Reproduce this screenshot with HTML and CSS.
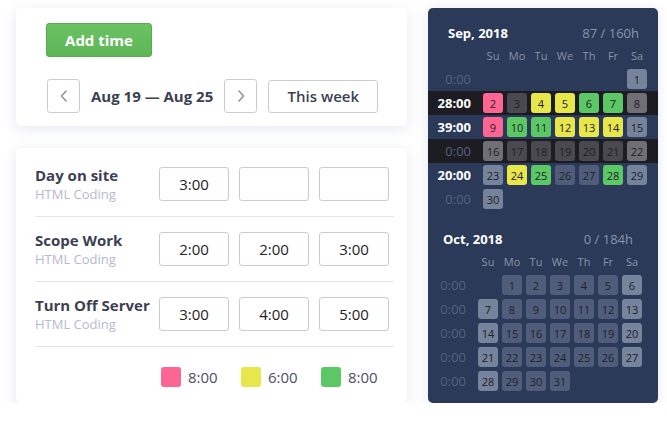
FILE: index.html
```html
<!DOCTYPE html>
<html>
<head>
<meta charset="utf-8">
<link rel="stylesheet" href="styles.css">
</head>
<body>
<div class="page">
  <div class="left">
    <section class="card card-top">
      <button class="btn-add">Add time</button>
      <div class="nav">
        <button class="btn-arrow" aria-label="Previous week">
          <svg width="10" height="14" viewBox="0 0 10 14"><path d="M7 2 L2.5 7 L7 12" fill="none" stroke="#8f94ab" stroke-width="1.6" stroke-linecap="round" stroke-linejoin="round"/></svg>
        </button>
        <span class="range">Aug 19 — Aug 25</span>
        <button class="btn-arrow" aria-label="Next week">
          <svg width="10" height="14" viewBox="0 0 10 14"><path d="M3 2 L7.5 7 L3 12" fill="none" stroke="#8f94ab" stroke-width="1.6" stroke-linecap="round" stroke-linejoin="round"/></svg>
        </button>
        <button class="btn-week">This week</button>
      </div>
    </section>

    <section class="card card-tasks">
      <div class="task">
        <div class="task-label">
          <div class="task-title">Day on site</div>
          <div class="task-sub">HTML Coding</div>
        </div>
        <div class="task-inputs">
          <div class="time-box">3:00</div>
          <div class="time-box"></div>
          <div class="time-box"></div>
        </div>
      </div>
      <div class="task">
        <div class="task-label">
          <div class="task-title">Scope Work</div>
          <div class="task-sub">HTML Coding</div>
        </div>
        <div class="task-inputs">
          <div class="time-box">2:00</div>
          <div class="time-box">2:00</div>
          <div class="time-box">3:00</div>
        </div>
      </div>
      <div class="task">
        <div class="task-label">
          <div class="task-title">Turn Off Server</div>
          <div class="task-sub">HTML Coding</div>
        </div>
        <div class="task-inputs">
          <div class="time-box">3:00</div>
          <div class="time-box">4:00</div>
          <div class="time-box">5:00</div>
        </div>
      </div>
      <div class="legend">
        <div class="legend-item"><span class="swatch pink"></span><span>8:00</span></div>
        <div class="legend-item"><span class="swatch yellow"></span><span>6:00</span></div>
        <div class="legend-item"><span class="swatch green"></span><span>8:00</span></div>
      </div>
    </section>
  </div>

  <aside class="panel">
    <div class="month">
      <div class="month-head"><span class="month-name">Sep, 2018</span><span class="month-total">87 / 160h</span></div>
      <div class="week days"><span></span><span>Su</span><span>Mo</span><span>Tu</span><span>We</span><span>Th</span><span>Fr</span><span>Sa</span></div>
      <div class="week">
        <span class="wl">0:00</span>
        <span></span><span></span><span></span><span></span><span></span><span></span>
        <span class="d we">1</span>
      </div>
      <div class="week band">
        <span class="wl on">28:00</span>
        <span class="d pink">2</span><span class="d">3</span><span class="d yellow">4</span><span class="d yellow">5</span><span class="d green">6</span><span class="d green">7</span><span class="d we">8</span>
      </div>
      <div class="week">
        <span class="wl on">39:00</span>
        <span class="d pink">9</span><span class="d green">10</span><span class="d green">11</span><span class="d yellow">12</span><span class="d yellow">13</span><span class="d yellow">14</span><span class="d we">15</span>
      </div>
      <div class="week band">
        <span class="wl">0:00</span>
        <span class="d we">16</span><span class="d">17</span><span class="d">18</span><span class="d">19</span><span class="d">20</span><span class="d">21</span><span class="d we">22</span>
      </div>
      <div class="week">
        <span class="wl on">20:00</span>
        <span class="d we">23</span><span class="d yellow">24</span><span class="d green">25</span><span class="d">26</span><span class="d">27</span><span class="d green">28</span><span class="d we">29</span>
      </div>
      <div class="week">
        <span class="wl">0:00</span>
        <span class="d we">30</span>
      </div>
    </div>

    <div class="month month-oct">
      <div class="month-head"><span class="month-name">Oct, 2018</span><span class="month-total">0 / 184h</span></div>
      <div class="week days"><span></span><span>Su</span><span>Mo</span><span>Tu</span><span>We</span><span>Th</span><span>Fr</span><span>Sa</span></div>
      <div class="week">
        <span class="wl">0:00</span>
        <span></span><span class="d">1</span><span class="d">2</span><span class="d">3</span><span class="d">4</span><span class="d">5</span><span class="d we">6</span>
      </div>
      <div class="week">
        <span class="wl">0:00</span>
        <span class="d we">7</span><span class="d">8</span><span class="d">9</span><span class="d">10</span><span class="d">11</span><span class="d">12</span><span class="d we">13</span>
      </div>
      <div class="week">
        <span class="wl">0:00</span>
        <span class="d we">14</span><span class="d">15</span><span class="d">16</span><span class="d">17</span><span class="d">18</span><span class="d">19</span><span class="d we">20</span>
      </div>
      <div class="week">
        <span class="wl">0:00</span>
        <span class="d we">21</span><span class="d">22</span><span class="d">23</span><span class="d">24</span><span class="d">25</span><span class="d">26</span><span class="d we">27</span>
      </div>
      <div class="week">
        <span class="wl">0:00</span>
        <span class="d we">28</span><span class="d">29</span><span class="d">30</span><span class="d">31</span>
      </div>
    </div>
  </aside>
</div>
</body>
</html>
```

FILE: styles.css
```css
* { box-sizing: border-box; }

html, body {
  margin: 0;
  background: #ffffff;
}

body {
  font-family: "Open Sans", "Liberation Sans", sans-serif;
  color: #3d3f52;
}

.page {
  display: flex;
  align-items: flex-start;
  gap: 21px;
  padding: 8px 0 0 16px;
}

.left {
  width: 391px;
  display: flex;
  flex-direction: column;
  gap: 22px;
}

.card {
  background: #fff;
  border-radius: 6px;
  box-shadow: 0 3px 14px rgba(60, 80, 140, 0.13);
}

/* ---------- top card ---------- */
.card-top {
  height: 118px;
  padding: 15px 0 0 30px;
}

.btn-add {
  display: block;
  width: 106px;
  height: 34px;
  padding: 0;
  border: 1px solid #57ac50;
  border-radius: 3px;
  background: linear-gradient(#6bc264, #5db656);
  color: #fff;
  font-family: inherit;
  font-weight: 700;
  font-size: 15px;
}

.nav {
  display: flex;
  align-items: center;
  gap: 11px;
  margin-top: 22px;
  margin-left: 1px;
}

.btn-arrow {
  width: 33px;
  height: 34px;
  padding: 0;
  border: 1px solid #c9cbdb;
  border-radius: 3px;
  background: #fff;
  display: flex;
  align-items: center;
  justify-content: center;
}

.range {
  font-weight: 700;
  font-size: 15px;
  color: #3d3f52;
}

.btn-week {
  width: 110px;
  height: 33px;
  padding: 0;
  border: 1px solid #c9cbdb;
  border-radius: 3px;
  background: #fff;
  font-family: inherit;
  font-weight: 600;
  font-size: 15px;
  color: #3d3f52;
}

/* ---------- task card ---------- */
.card-tasks {
  height: 255px;
  padding: 4px 13px 0 19px;
}

.task {
  display: flex;
  align-items: center;
  height: 65px;
  border-bottom: 1px solid #e2e3ee;
}

.task-label {
  flex: 1;
}

.task-title {
  font-weight: 700;
  font-size: 15px;
  line-height: 20px;
  color: #3d3f52;
}

.task-sub {
  font-size: 13px;
  line-height: 18px;
  color: #b6b9cf;
}

.task-inputs,
.legend {
  display: flex;
  gap: 10px;
  margin-right: 5px;
}

.time-box {
  width: 70px;
  height: 34px;
  border: 1px solid #c9cbdb;
  border-radius: 3px;
  display: flex;
  align-items: center;
  justify-content: center;
  font-size: 15px;
  color: #222;
}

.legend {
  justify-content: flex-end;
  padding-top: 20px;
}

.legend-item {
  width: 70px;
  display: flex;
  align-items: center;
  gap: 7px;
  padding-left: 2px;
  font-size: 15px;
  color: #4b4f68;
}

.swatch {
  width: 20px;
  height: 20px;
  border-radius: 3px;
}

/* ---------- calendar panel ---------- */
.panel {
  width: 230px;
  height: 395px;
  background: #2a3a58;
  border-radius: 5px;
  padding: 15px 0 0;
  box-shadow: 0 3px 14px rgba(60, 80, 140, 0.13);
}

.month + .month {
  margin-top: 18px;
}

.month-head {
  display: flex;
  justify-content: space-between;
  align-items: center;
  height: 20px;
  padding: 0 19px 0 20px;
  font-size: 13px;
}

.month-oct .month-head {
  padding: 0 25px 0 15px;
}

.month-name {
  font-weight: 700;
  color: #fff;
}

.month-total {
  color: #8b94aa;
}

.week {
  display: grid;
  grid-template-columns: 51px repeat(7, 20px);
  column-gap: 4px;
  align-items: center;
  height: 24px;
}

.month-oct .week {
  grid-template-columns: 46px repeat(7, 20px);
}

.week.days {
  height: 16px;
  margin: 4px 0;
  font-size: 11px;
  color: #8b94aa;
  text-align: center;
}

.week.band {
  background: #1d1c22;
}

.wl {
  text-align: right;
  padding-right: 8px;
  font-size: 13px;
  color: #56627f;
}

.wl.on {
  color: #fff;
  font-weight: 700;
}

.d {
  width: 20px;
  height: 20px;
  border-radius: 3px;
  background: #4f5d7a;
  color: #1f2028;
  font-size: 11px;
  display: flex;
  align-items: center;
  justify-content: center;
}

.d.we {
  background: #75839b;
}

.band .d {
  background: #4a494f;
}

.band .d.we {
  background: #6f6f75;
}

.pink, .band .d.pink { background: #fd6592; }
.yellow, .band .d.yellow { background: #e7e64b; }
.green, .band .d.green { background: #5bc865; }
```
